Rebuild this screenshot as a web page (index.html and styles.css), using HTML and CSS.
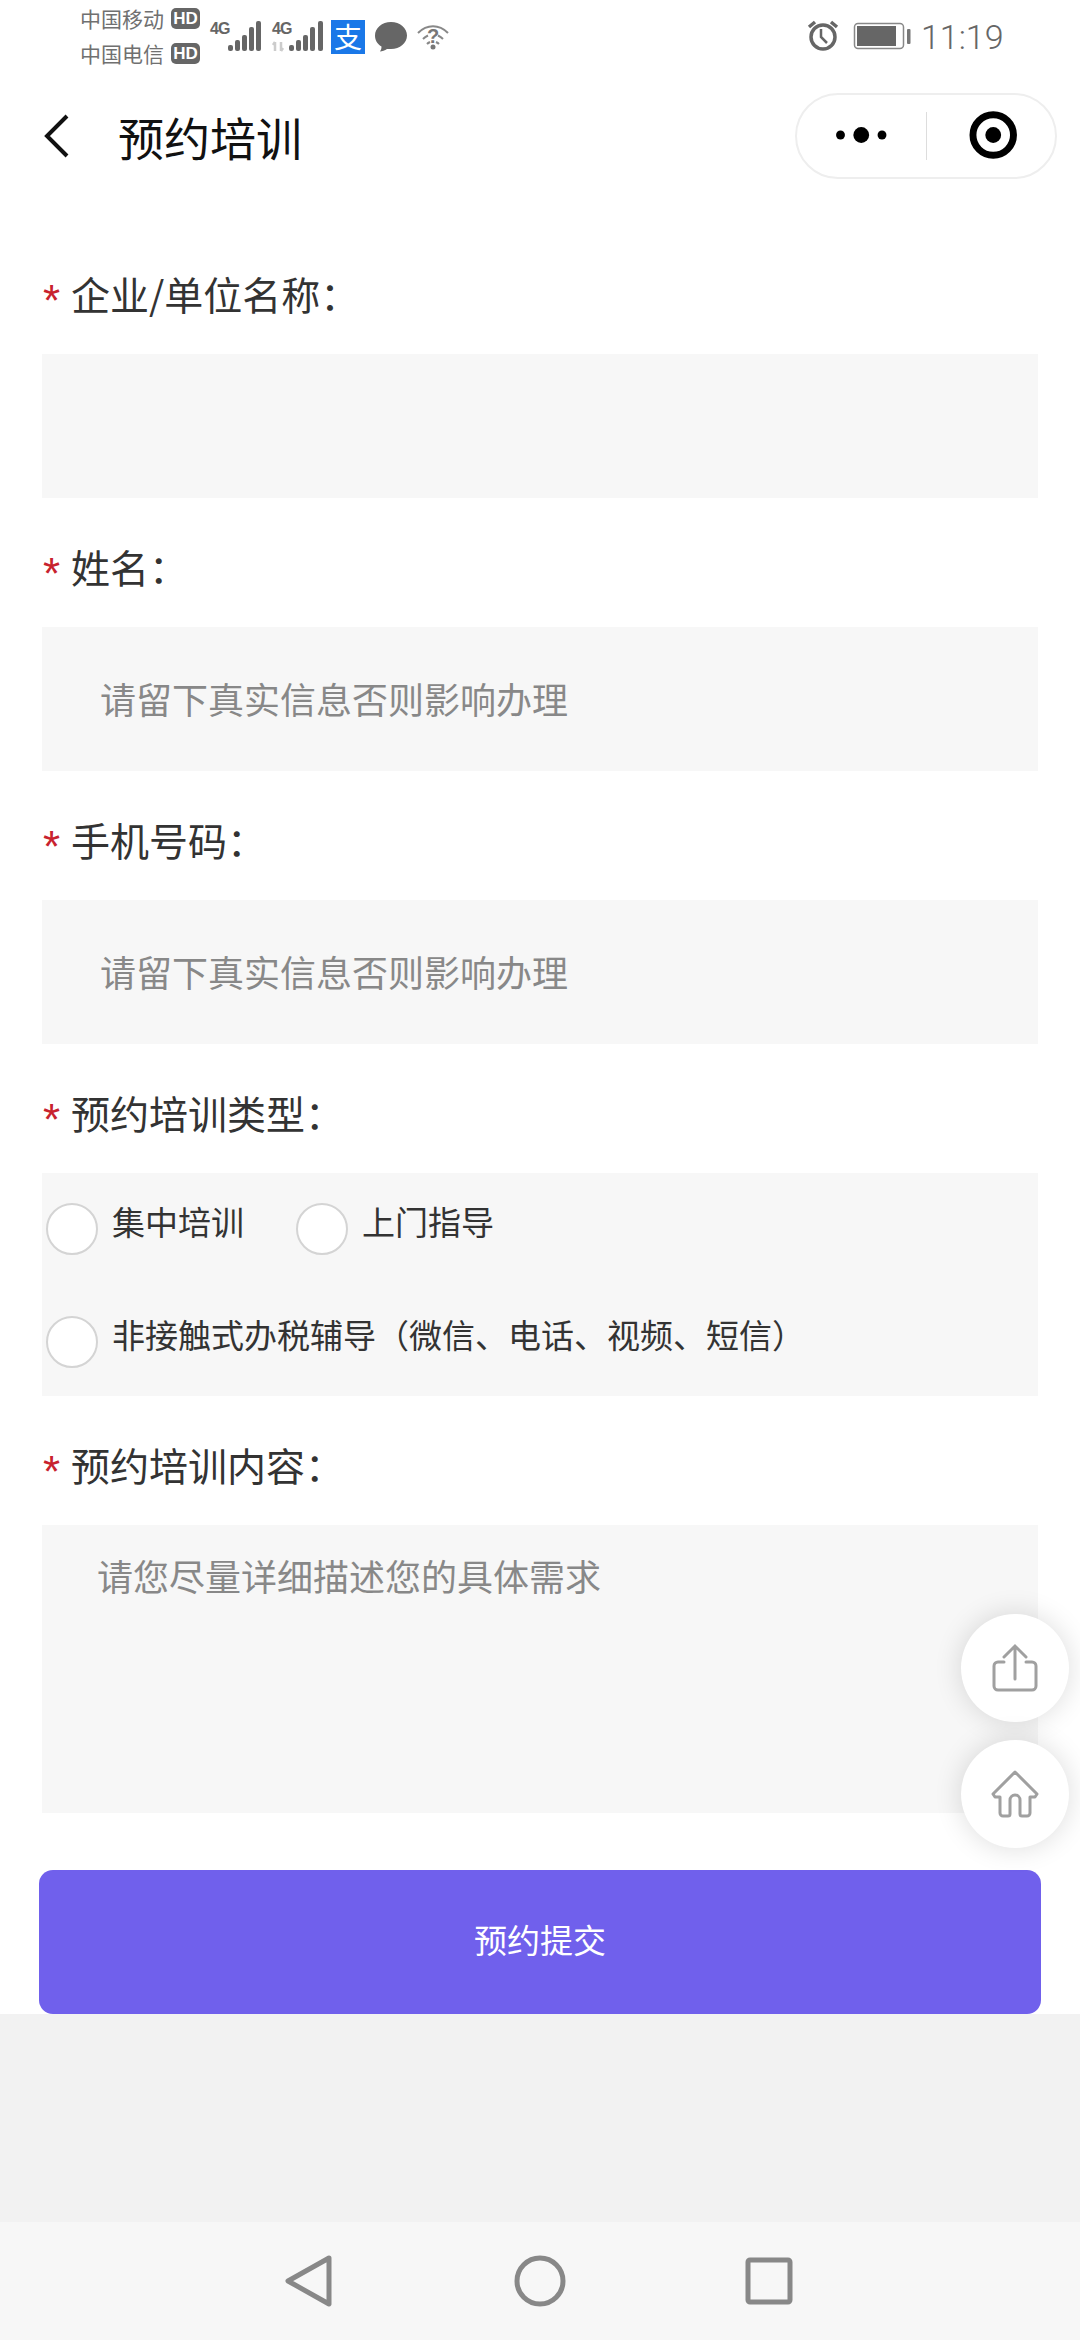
FILE: index.html
```html
<!DOCTYPE html>
<html lang="zh-CN">
<head>
<meta charset="utf-8">
<title>预约培训</title>
<link rel="stylesheet" href="styles.css">
</head>
<body>
<div class="page">
  <div class="statusbar">
    <div class="carriers">
      <div class="carrier"><span>中国移动</span><span class="hd">HD</span></div>
      <div class="carrier"><span>中国电信</span><span class="hd">HD</span></div>
    </div>
    <svg class="st-signal" width="60" height="72" viewBox="208 0 60 72">
      <text x="210" y="34" class="st-4g">4G</text>
      <g fill="#666"><rect x="228" y="45" width="5" height="6" rx="2"/><rect x="235" y="40" width="5" height="11" rx="2"/><rect x="242" y="35" width="5" height="16" rx="2"/><rect x="249" y="27" width="5" height="24" rx="2"/><rect x="256" y="21" width="5" height="30" rx="2"/></g>
    </svg>
    <svg class="st-signal2" width="60" height="72" viewBox="270 0 60 72">
      <text x="272" y="34" class="st-4g">4G</text>
      <path d="M275 42v9M275 42l-2 3M281 51v-9M281 51l2-3" stroke="#ccc" stroke-width="2.500" fill="none"/>
      <g fill="#666"><rect x="289" y="45" width="5" height="6" rx="2"/><rect x="296" y="40" width="5" height="11" rx="2"/><rect x="303" y="35" width="5" height="16" rx="2"/><rect x="310" y="27" width="5" height="24" rx="2"/><rect x="318" y="21" width="5" height="30" rx="2"/></g>
    </svg>
    <div class="alipay">支</div>
    <svg class="st-bubble" width="34" height="72" viewBox="374 0 34 72">
      <path d="M391 22c9 0 16 6 16 13.500s-7 13.500-16 13.500c-1.500 0-3 0-4 0-2 1.500-5 2.500-7 2.500 1-1.500 1.500-3 1.500-5-4.500-2.500-6.500-6.500-6.500-11 0-7.500 7-13.500 16-13.500z" fill="#666"/>
    </svg>
    <svg class="st-wifi" width="34" height="72" viewBox="416 0 34 72">
      <path d="M418 33c9-9 21-9 30 0M423 39c2-2 4-3 5-3.500M443 39c-2-2-4-3-5-3.500M427 44c1-1 2-1.500 3-2M439 44c-1-1-2-1.500-3-2" stroke="#888" stroke-width="2" fill="none"/>
      <text x="433" y="43" class="st-q">?</text>
      <circle cx="433" cy="47" r="2.500" fill="#777"/>
    </svg>
    <svg class="st-alarm" width="34" height="72" viewBox="806 0 34 72">
      <path d="M808 27l6-5M836 27l-6-5" stroke="#666" stroke-width="3.500" fill="none"/>
      <circle cx="822" cy="37" r="12" stroke="#666" stroke-width="3.500" fill="none"/>
      <path d="M820 29v8l6 6" stroke="#666" stroke-width="2.500" fill="none"/>
    </svg>
    <svg class="st-battery" width="58" height="72" viewBox="852 0 58 72">
      <rect x="853.500" y="23.500" width="49" height="25" rx="3.500" stroke="#888" stroke-width="1.500" fill="#fff"/>
      <rect x="856" y="26" width="39" height="20" fill="#666"/>
      <rect x="906" y="29" width="3.500" height="15" rx="1" fill="#777"/>
    </svg>
    <div class="time">11:19</div>
  </div>

  <div class="header">
    <svg class="back" width="26" height="44" viewBox="0 0 26 44">
      <path d="M23 2L3 22l20 20" stroke="#111" stroke-width="4" fill="none"/>
    </svg>
    <div class="title">预约培训</div>
    <div class="capsule">
      <svg class="cap-more" width="130" height="84" viewBox="0 0 130 84">
        <circle cx="44" cy="41" r="4.500" fill="#000"/><circle cx="65" cy="41" r="8" fill="#000"/><circle cx="86" cy="41" r="4.500" fill="#000"/>
      </svg>
      <div class="cap-sep"></div>
      <svg class="cap-target" width="130" height="84" viewBox="0 0 130 84">
        <circle cx="67" cy="41" r="20.500" stroke="#000" stroke-width="7" fill="none"/><circle cx="67" cy="41" r="8" fill="#000"/>
      </svg>
    </div>
  </div>

  <div class="form">
    <div class="field">
      <div class="label"><span class="req">*</span><span>企业/单位名称：</span></div>
      <div class="input"></div>
    </div>
    <div class="field">
      <div class="label"><span class="req">*</span><span>姓名：</span></div>
      <div class="input">请留下真实信息否则影响办理</div>
    </div>
    <div class="field">
      <div class="label"><span class="req">*</span><span>手机号码：</span></div>
      <div class="input">请留下真实信息否则影响办理</div>
    </div>
    <div class="field">
      <div class="label"><span class="req">*</span><span>预约培训类型：</span></div>
      <div class="radios">
        <div class="radio-row">
          <div class="option"><span class="radio"></span><span>集中培训</span></div>
          <div class="option"><span class="radio"></span><span>上门指导</span></div>
        </div>
        <div class="radio-row">
          <div class="option"><span class="radio"></span><span>非接触式办税辅导（微信、电话、视频、短信）</span></div>
        </div>
      </div>
    </div>
    <div class="field">
      <div class="label"><span class="req">*</span><span>预约培训内容：</span></div>
      <div class="textarea">请您尽量详细描述您的具体需求</div>
    </div>
    <div class="submit">预约提交</div>
  </div>

  <div class="spacer"></div>

  <div class="navbar">
    <svg width="48" height="54" viewBox="0 0 48 54"><path d="M44 4L3 27l41 23z" stroke="#888" stroke-width="5" stroke-linejoin="round" fill="none"/></svg>
    <svg width="54" height="54" viewBox="0 0 54 54"><circle cx="27" cy="27" r="23" stroke="#888" stroke-width="5" fill="none"/></svg>
    <svg class="nav-square" width="50" height="50" viewBox="0 0 50 50"><rect x="4" y="4" width="42" height="42" rx="2" stroke="#888" stroke-width="5" fill="none"/></svg>
  </div>

  <div class="fabs">
    <div class="fab">
      <svg width="48" height="50" viewBox="0 0 48 50">
        <path d="M13 19H7a4 4 0 0 0-4 4v20a4 4 0 0 0 4 4h34a4 4 0 0 0 4-4V23a4 4 0 0 0-4-4h-6M24 36V4M13 14L24 3l11 11" stroke="#a0a0a0" stroke-width="3" stroke-linecap="round" fill="none"/>
      </svg>
    </div>
    <div class="fab">
      <svg width="50" height="50" viewBox="0 0 50 50">
        <path d="M25 3L3 25l2 3h5v16a3 3 0 0 0 3 3h5a2 2 0 0 0 2-2V31a5 5 0 0 1 10 0v14a2 2 0 0 0 2 2h5a3 3 0 0 0 3-3V28h5l2-3z" stroke="#a0a0a0" stroke-width="3" stroke-linejoin="round" fill="none"/>
      </svg>
    </div>
  </div>
</div>
</body>
</html>
```

FILE: styles.css
```css
* { box-sizing: border-box; }
html, body { margin: 0; padding: 0; }
body {
  width: 1080px;
  height: 2340px;
  overflow: hidden;
  background: #fff;
  font-family: "Noto Sans CJK SC", "Noto Sans", sans-serif;
  color: #333;
}
.page {
  position: relative;
  width: 1080px;
  height: 2340px;
  display: flex;
  flex-direction: column;
}

/* status bar */
.statusbar {
  height: 72px;
  flex: none;
  display: flex;
  padding-left: 80px;
  color: #666;
}
.carriers { width: 120px; padding-top: 1px; margin-right: 8px; }
.carrier {
  display: flex;
  align-items: center;
  height: 35px;
  font-size: 21px;
  line-height: 35px;
  color: #707070;
}
.hd {
  width: 29px;
  height: 21px;
  margin-left: 7px;
  background: #666;
  border-radius: 5px;
  color: #fff;
  font-family: "Liberation Sans", sans-serif;
  font-weight: 700;
  font-size: 17px;
  line-height: 21px;
  text-align: center;
}
.st-signal { margin-right: 2px; }
.st-4g {
  font-family: "Liberation Sans", sans-serif;
  font-weight: 700;
  font-size: 16px;
  fill: #666;
  letter-spacing: -1px;
}
.st-q {
  font-family: "Liberation Sans", sans-serif;
  font-weight: 700;
  font-size: 20px;
  fill: #777;
  text-anchor: middle;
}
.alipay {
  width: 34px;
  height: 34px;
  margin: 20px 9px 0 1px;
  background: #1a78e8;
  color: #fff;
  font-size: 28px;
  line-height: 32px;
  text-align: center;
}
.st-bubble { margin-right: 8px; }
.st-alarm { margin-left: auto; margin-right: 12px; }
.st-battery { margin-right: 10px; }
.time {
  width: 159px;
  padding-top: 17px;
  font-family: Roboto, sans-serif;
  font-weight: 300;
  font-size: 34px;
  line-height: 40px;
  color: #666;
}

/* header */
.header {
  height: 132px;
  flex: none;
  display: flex;
  align-items: center;
  padding-left: 44px;
}
.back { flex: none; margin-top: -4px; }
.title {
  margin-left: 48px;
  margin-top: -4px;
  font-size: 46px;
  line-height: 60px;
  color: #111;
}
.capsule {
  width: 262px;
  height: 86px;
  margin-left: auto;
  margin-right: 23px;
  margin-top: -4px;
  display: flex;
  align-items: center;
  border: 2px solid #eee;
  border-radius: 43px;
  background: #fff;
}
.cap-sep { width: 1px; height: 48px; background: #ddd; flex: none; }

/* form */
.form {
  flex: none;
  padding: 66px 39px 0;
  background: #fff;
}
.field { margin: 0 3px 45px; }
.label {
  display: flex;
  align-items: flex-start;
  height: 50px;
  margin-bottom: 34px;
  font-size: 39px;
  line-height: 46px;
  color: #333;
}
.req {
  width: 29px;
  flex: none;
  font-size: 44px;
  color: #c8222e;
  font-family: "Liberation Sans", sans-serif;
  line-height: 62px;
  padding-left: 1px;
}
.input {
  height: 144px;
  padding-left: 58px;
  background: #f7f7f7;
  font-size: 36px;
  line-height: 143px;
  color: #888;
}
.radios {
  height: 223px;
  padding: 30px 0 0 4px;
  background: #f7f7f7;
  font-size: 33px;
  line-height: 36px;
  color: #333;
}
.radio-row { display: flex; gap: 52px; margin-bottom: 61px; }
.option { display: flex; align-items: flex-start; gap: 14px; }
.radio {
  flex: none;
  width: 52px;
  height: 52px;
  border-radius: 50%;
  border: 2px solid #d4d4d4;
  background: #fff;
}
.textarea {
  height: 288px;
  padding: 25px 0 0 55px;
  background: #f7f7f7;
  font-size: 36px;
  line-height: 50px;
  color: #888;
}
.submit {
  height: 144px;
  margin-top: 57px;
  border-radius: 14px;
  background: #7060ec;
  color: #fff;
  font-size: 33px;
  line-height: 139px;
  text-align: center;
}
.field:nth-last-child(2) { margin-bottom: 0; }

.spacer { flex: 1; background: #f2f2f2; }
.navbar {
  height: 118px;
  flex: none;
  display: flex;
  align-items: center;
  padding-left: 285px;
  gap: 180px;
  background: #f7f7f7;
}
.nav-square { margin-left: -3px; }

/* floating buttons */
.fabs {
  position: absolute;
  top: 1614px;
  right: 11px;
  display: flex;
  flex-direction: column;
  gap: 18px;
}
.fab {
  width: 108px;
  height: 108px;
  display: flex;
  align-items: center;
  justify-content: center;
  border-radius: 50%;
  background: #fff;
  box-shadow: 0 0 28px rgba(0, 0, 0, 0.14);
}
```
